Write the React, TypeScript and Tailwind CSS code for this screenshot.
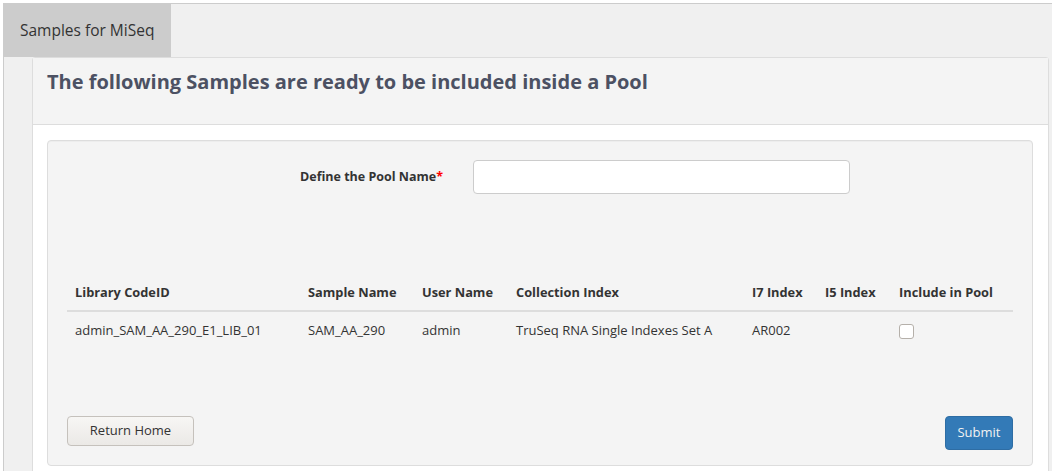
import React from 'react'

const cols = [
  { label: 'Library CodeID', w: 'w-[233px]' },
  { label: 'Sample Name', w: 'w-[114px]' },
  { label: 'User Name', w: 'w-[94px]' },
  { label: 'Collection Index', w: 'w-[236px]' },
  { label: 'I7 Index', w: 'w-[73px]' },
  { label: 'I5 Index', w: 'w-[74px]' },
  { label: 'Include in Pool', w: 'w-[122px]' },
]

const rows = [
  ['admin_SAM_AA_290_E1_LIB_01', 'SAM_AA_290', 'admin', 'TruSeq RNA Single Indexes Set A', 'AR002', ''],
]

function App() {
  return (
    <div className="w-[1052px] h-[471px] overflow-hidden bg-white pt-[3px] pl-[3px] font-['Open_Sans',sans-serif] text-[#333]">
      <div className="h-full border-t border-l border-[#cccccc] bg-[#f0f0f0]">
        {/* tab bar */}
        <div className="flex h-[53px]">
          <div className="w-[167px] bg-[#cccccc] flex items-center pl-[16px] text-[15.5px] text-[#333]">
            Samples for MiSeq
          </div>
        </div>

        <div className="pl-[28px]">
          <div className="border border-[#dddddd] rounded-t-[3px] w-[1017px] h-[420px] bg-white">
            <div className="h-[67px] bg-[#f4f4f4] border-b border-[#dddddd] pl-[14px] pt-[10px]">
              <h1 className="text-[20px] leading-[28px] font-bold text-[#4c5163]">
                The following Samples are ready to be included inside a Pool
              </h1>
            </div>

            <div className="pt-[15px] pl-[14px] pr-[15px]">
              <div className="bg-[#f4f4f4] border border-[#dddddd] rounded-[4px] px-[19px] pt-[19px] pb-[15px] shadow-[inset_0_1px_1px_rgba(0,0,0,0.03)]">
                <div className="flex items-center">
                  <label className="w-[376px] text-right text-[12.5px] font-bold text-[#333]">
                    Define the Pool Name<span className="text-[#ff0000]">*</span>
                  </label>
                  <input
                    type="text"
                    className="ml-[30px] w-[377px] h-[34px] bg-white border border-[#cccccc] rounded-[4px] px-3 text-[13px] outline-none"
                  />
                </div>

                <table className="mt-[80px] w-[946px] table-fixed border-collapse text-[13px]">
                  <thead>
                    <tr className="border-b-2 border-[#dddddd]">
                      {cols.map((c) => (
                        <th key={c.label} className={`${c.w} text-left font-bold px-[8px] py-[8px] leading-[20px] text-[12.8px]`}>
                          {c.label}
                        </th>
                      ))}
                    </tr>
                  </thead>
                  <tbody>
                    {rows.map((r, i) => (
                      <tr key={i}>
                        {r.map((cell, j) => (
                          <td key={j} className="px-[8px] py-[8px] leading-[20px] align-top">
                            {cell}
                          </td>
                        ))}
                        <td className="px-[8px] py-[8px] leading-[20px] align-top">
                          <div className="mt-[4px] w-[15px] h-[15px] rounded-[3px] border border-[#b5b0aa] bg-white" />
                        </td>
                      </tr>
                    ))}
                  </tbody>
                </table>

                <div className="mt-[68px] flex justify-between items-start">
                  <button className="w-[127px] h-[30px] rounded-[4px] border border-[#c5c1bc] bg-gradient-to-b from-[#f7f6f4] to-[#ebe9e6] text-[13px] text-[#333]">
                    Return Home
                  </button>
                  <button className="w-[68px] h-[34px] rounded-[4px] border border-[#2e6da4] bg-[#337ab7] text-[13px] text-[#f2f2f2]">
                    Submit
                  </button>
                </div>
              </div>
            </div>
          </div>
        </div>
      </div>
    </div>
  )
}

export default App
